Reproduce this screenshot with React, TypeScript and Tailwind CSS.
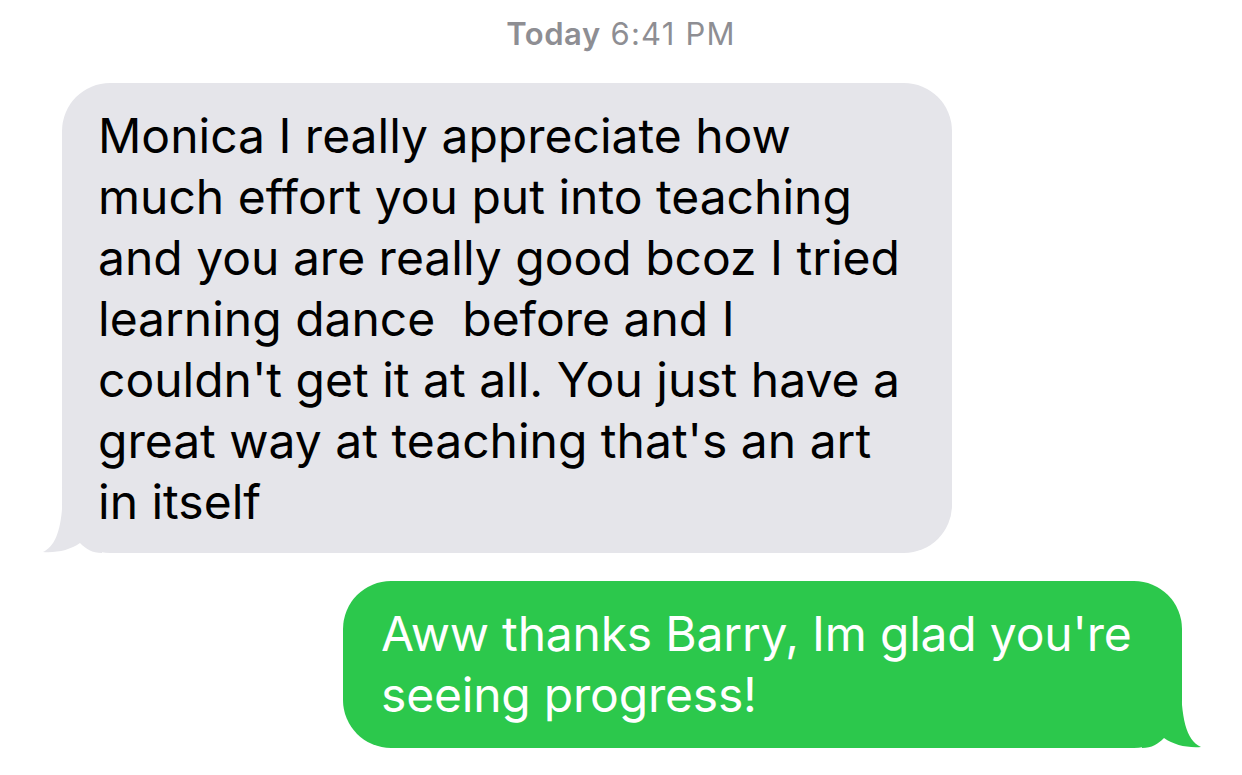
import React from "react";

function Tail({ color, flip }: { color: string; flip?: boolean }) {
    return (
        <svg
            width="60"
            height="70"
            viewBox="0 0 60 70"
            className={`absolute bottom-0 ${flip ? "right-[-20px] -scale-x-100" : "left-[-20px]"}`}
        >
            <path
                d="M21 0 C21 40 16 62 1 69 C15 70 28 67 38 60 C44 66 50 70 60 70 L60 0 Z"
                fill={color}
            />
        </svg>
    );
}

export default function App() {
    return (
        <div className="w-[1242px] h-[775px] bg-white overflow-hidden font-['Inter',sans-serif]">
            {/* Timestamp */}
            <div className="pt-[14px] h-[83px] text-center text-[31px] leading-[40px] tracking-[1.2px] text-[#8e8e93]">
                <span className="font-semibold tracking-[0.5px]">Today</span> 6:41 PM
            </div>

            {/* Incoming */}
            <div className="relative ml-[62px] w-[890px] h-[470px] bg-[#e5e5ea] rounded-[48px] px-[36px] py-[22px]">
                <Tail color="#e5e5ea" />
                <p className="relative text-[48px] leading-[61px] text-black whitespace-pre">
                    {"Monica I really appreciate how\nmuch effort you put into teaching\nand you are really good bcoz I tried\nlearning dance  before and I\ncouldn't get it at all. You just have a\ngreat way at teaching that's an art\nin itself"}
                </p>
            </div>

            {/* Outgoing */}
            <div className="flex justify-end pr-[60px] mt-[28px]">
                <div className="relative w-[839px] h-[167px] bg-[#2cc84c] rounded-[48px] px-[38px] py-[22px]">
                    <Tail color="#2cc84c" flip />
                    <p className="relative text-[48px] leading-[61px] text-white tracking-[-0.2px] whitespace-pre">
                        {"Aww thanks Barry, Im glad you're\nseeing progress!"}
                    </p>
                </div>
            </div>
        </div>
    );
}
